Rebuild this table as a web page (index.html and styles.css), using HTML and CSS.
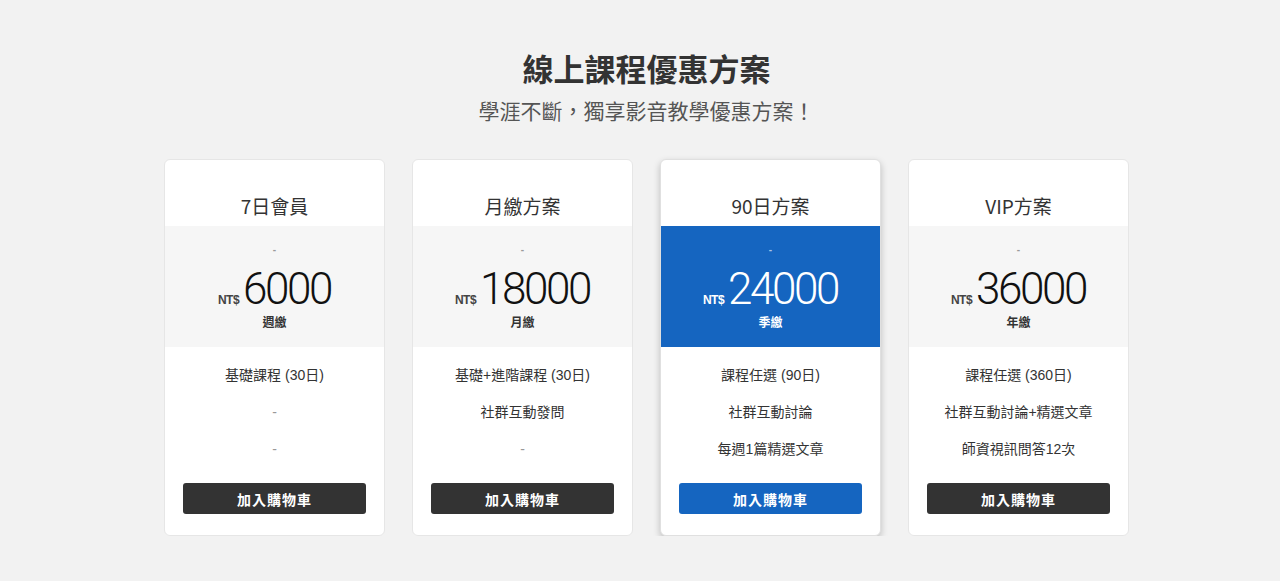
FILE: index.html
```html
<!DOCTYPE html>
<html lang="zh-Hant">
<head>
<meta charset="utf-8">
<title>線上課程優惠方案</title>
<link rel="stylesheet" href="styles.css">
</head>
<body>
<section class="pricing">
  <h1 class="pricing-title">線上課程優惠方案</h1>
  <p class="pricing-sub">學涯不斷，獨享影音教學優惠方案！</p>
  <div class="plans">
    <div class="plan">
      <div class="plan-head">7日會員</div>
      <div class="plan-price">
        <div class="plan-old">-</div>
        <div class="plan-amount"><span class="cur">NT$</span><span class="num">6000</span></div>
        <div class="plan-period">週繳</div>
      </div>
      <ul class="plan-features">
        <li>基礎課程 (30日)</li>
        <li class="empty">-</li>
        <li class="empty">-</li>
      </ul>
      <div class="plan-foot"><button class="btn">加入購物車</button></div>
    </div>
    <div class="plan">
      <div class="plan-head">月繳方案</div>
      <div class="plan-price">
        <div class="plan-old">-</div>
        <div class="plan-amount"><span class="cur">NT$</span><span class="num">18000</span></div>
        <div class="plan-period">月繳</div>
      </div>
      <ul class="plan-features">
        <li>基礎+進階課程 (30日)</li>
        <li>社群互動發問</li>
        <li class="empty">-</li>
      </ul>
      <div class="plan-foot"><button class="btn">加入購物車</button></div>
    </div>
    <div class="plan featured">
      <div class="plan-head">90日方案</div>
      <div class="plan-price">
        <div class="plan-old">-</div>
        <div class="plan-amount"><span class="cur">NT$</span><span class="num">24000</span></div>
        <div class="plan-period">季繳</div>
      </div>
      <ul class="plan-features">
        <li>課程任選 (90日)</li>
        <li>社群互動討論</li>
        <li>每週1篇精選文章</li>
      </ul>
      <div class="plan-foot"><button class="btn">加入購物車</button></div>
    </div>
    <div class="plan">
      <div class="plan-head">VIP方案</div>
      <div class="plan-price">
        <div class="plan-old">-</div>
        <div class="plan-amount"><span class="cur">NT$</span><span class="num">36000</span></div>
        <div class="plan-period">年繳</div>
      </div>
      <ul class="plan-features">
        <li>課程任選 (360日)</li>
        <li>社群互動討論+精選文章</li>
        <li>師資視訊問答12次</li>
      </ul>
      <div class="plan-foot"><button class="btn">加入購物車</button></div>
    </div>
  </div>
</section>
</body>
</html>
```

FILE: styles.css
```css
html, body {
  margin: 0;
  padding: 0;
  background: #f2f2f2;
  font-family: "Noto Sans CJK TC", "Noto Sans", sans-serif;
  color: #333;
}

.pricing {
  padding: 48px 0 0 13px;
  text-align: center;
}

.pricing-title {
  margin: 0;
  font-size: 31px;
  line-height: 40px;
  font-weight: 700;
  color: #333;
}

.pricing-sub {
  margin: 7px 0 0;
  font-size: 21px;
  line-height: 30px;
  font-weight: 400;
  color: #555;
}

.plans {
  margin-top: 34px;
  display: flex;
  justify-content: center;
  gap: 27px;
}

.plan {
  width: 219px;
  background: #fff;
  border: 1px solid #e6e6e6;
  border-radius: 6px;
  overflow: hidden;
  display: flex;
  flex-direction: column;
}

.plan.featured {
  border-color: #e0e0e0;
  box-shadow: 0 3px 7px rgba(0, 0, 0, 0.22);
}

.plan-head {
  padding: 33px 0 7px;
  font-size: 19px;
  line-height: 26px;
  color: #333;
}

.plan-price {
  background: #f6f6f6;
  padding: 15px 0 17px;
}

.featured .plan-price {
  background: #1565c0;
  color: #fff;
}

.plan-old {
  font-family: "Liberation Sans", sans-serif;
  font-size: 10px;
  font-weight: 700;
  line-height: 18px;
  color: #9a9a9a;
  margin-bottom: 9px;
}

.featured .plan-old {
  color: #a9c4e6;
}

.plan-amount {
  height: 42px;
  line-height: 42px;
  white-space: nowrap;
}

.cur {
  font-family: "Liberation Sans", "Noto Sans", sans-serif;
  font-size: 12px;
  font-weight: 700;
  color: #444;
  margin-right: 4px;
  letter-spacing: -0.5px;
}

.featured .cur {
  color: #fff;
}

.num {
  font-family: Roboto, "Noto Sans", sans-serif;
  font-weight: 300;
  font-size: 44px;
  letter-spacing: -2.4px;
  color: #111;
}

.featured .num {
  color: #fff;
}

.plan-period {
  margin-top: 4px;
  font-size: 12px;
  line-height: 16px;
  font-weight: 700;
  color: #333;
}

.featured .plan-period {
  color: #fff;
}

.plan-features {
  list-style: none;
  margin: 0;
  padding: 18px 0 0;
  font-family: "Liberation Sans", "Noto Sans CJK TC", sans-serif;
  font-size: 14px;
  line-height: 20px;
  color: #333;
}

.plan-features li + li {
  margin-top: 17px;
}

.plan-features li.empty {
  color: #999;
}

.plan-foot {
  padding: 24px 18px 21px;
}

.btn {
  display: block;
  width: 100%;
  height: 31px;
  border: 0;
  border-radius: 3px;
  background: #333;
  color: #fff;
  font-family: "Noto Sans CJK TC", sans-serif;
  font-size: 14px;
  font-weight: 700;
  letter-spacing: 1px;
  cursor: pointer;
}

.featured .btn {
  background: #1565c0;
}
```
